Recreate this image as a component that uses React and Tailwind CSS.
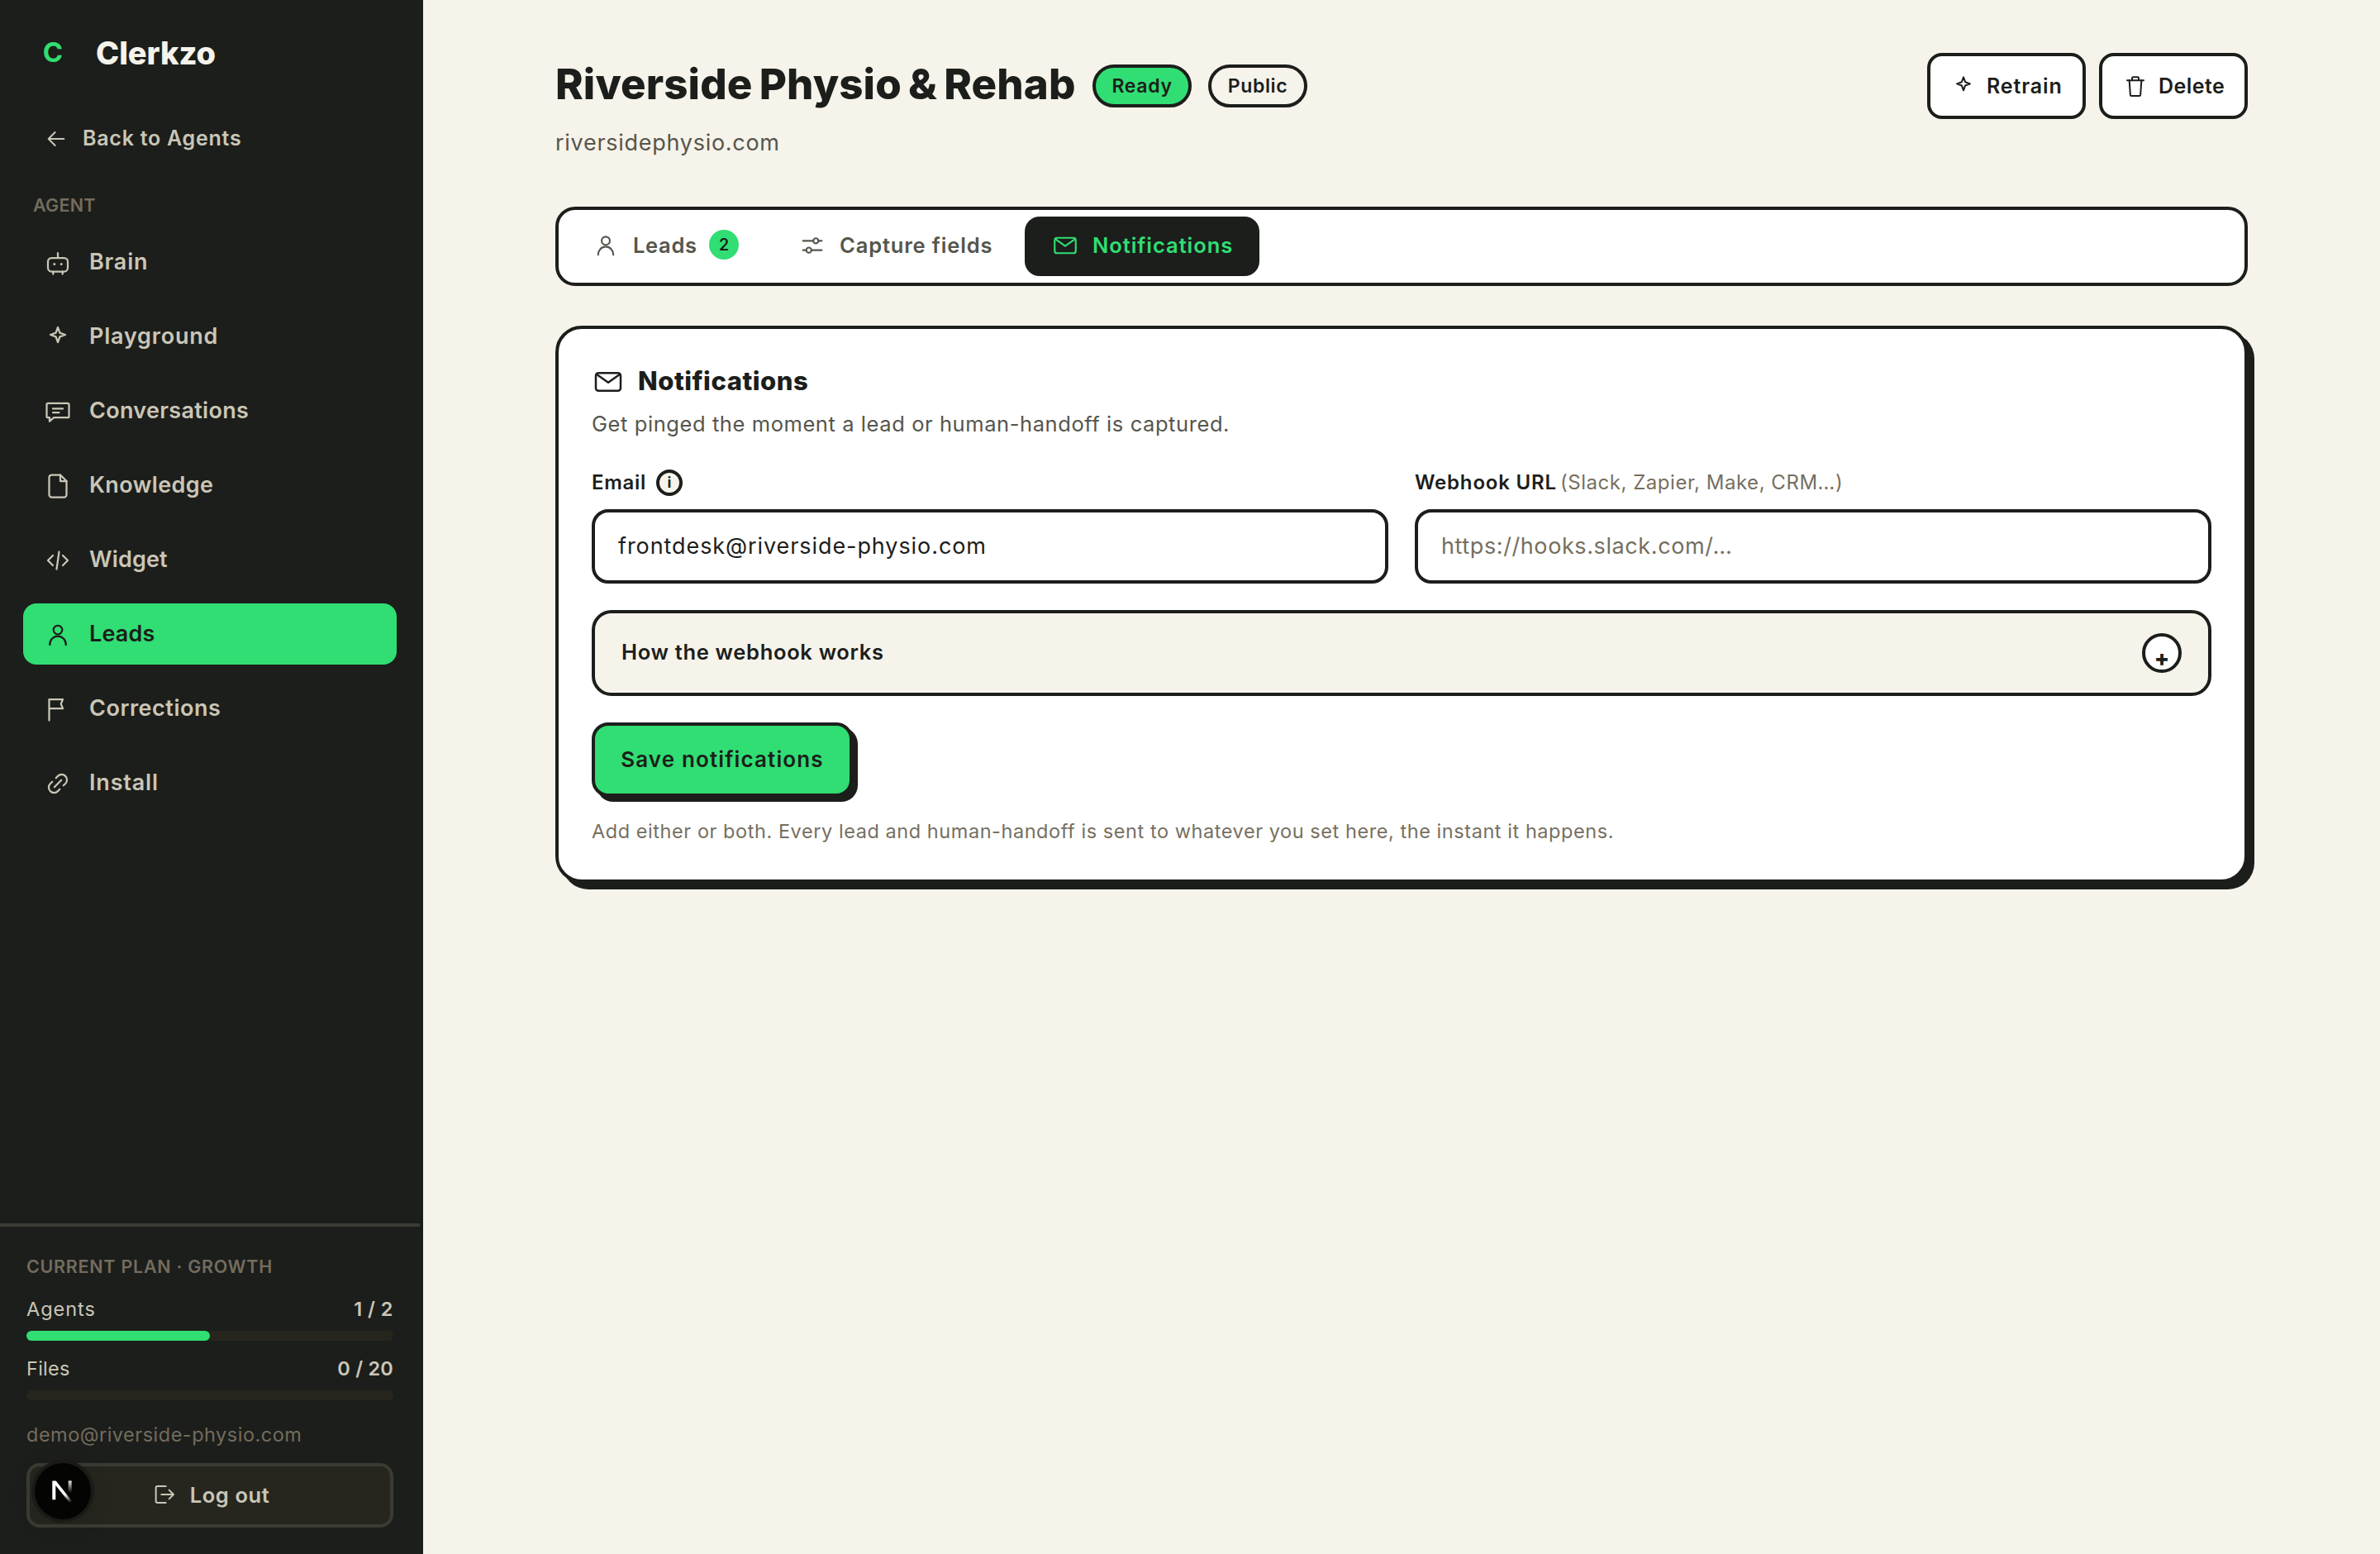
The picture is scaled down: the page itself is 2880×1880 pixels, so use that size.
import React from "react";

function Icon({ className = "", width = 1.5, children }) {
  return (
    <svg
      viewBox="0 0 24 24"
      fill="none"
      stroke="currentColor"
      strokeWidth={width}
      strokeLinecap="round"
      strokeLinejoin="round"
      className={`shrink-0 ${className}`}
      aria-hidden="true"
    >
      {children}
    </svg>
  );
}

const glyphs = {
  back: <path d="M19 12H5M11 6l-6 6 6 6" />,
  bot: (
    <>
      <rect x="4" y="8" width="16" height="11" rx="3" />
      <path d="M12 4v4M8.2 19v2M15.8 19v2" />
      <circle cx="9.2" cy="13" r="0.5" strokeWidth="1" />
      <circle cx="14.8" cy="13" r="0.5" strokeWidth="1" />
    </>
  ),
  spark: <path d="M12 4l1.6 4.4L18 10l-4.400 1.600L12 16l-1.600-4.400L6 10l4.400-1.600z" />,
  chat: (
    <>
      <path d="M4 5.200h16a1 1 0 0 1 1 1v9.600a1 1 0 0 1-1 1H8.800l-3.500 3v-3H4a1 1 0 0 1-1-1V6.200a1 1 0 0 1 1-1z" />
      <path d="M8 9.600h8M8 12.700h5" />
    </>
  ),
  file: (
    <>
      <path d="M14 3H7a2 2 0 0 0-2 2v14a2 2 0 0 0 2 2h10a2 2 0 0 0 2-2V8z" />
      <path d="M14 3v5h5" />
    </>
  ),
  code: <path d="M8 8l-4 4 4 4M16 8l4 4-4 4M13 5l-2 14" />,
  user: (
    <>
      <circle cx="12" cy="8" r="3.5" />
      <path d="M5.500 20a6.500 7 0 0 1 13 0" />
    </>
  ),
  flag: <path d="M5 21V4h11l-1.500 3.700L16 11.400H5" />,
  link: (
    <>
      <path d="M9.200 14.800l5.600-5.600" />
      <path d="M10.500 7.500l1.500-1.600a4.100 4.100 0 0 1 6.100 6.100L16.500 13.500" />
      <path d="M13.500 16.500l-1.500 1.600a4.100 4.100 0 0 1-6.100-6.100L7.500 10.500" />
    </>
  ),
  trash: (
    <>
      <path d="M4.500 7h15M9 7V5a1 1 0 0 1 1-1h4a1 1 0 0 1 1 1v2" />
      <path d="M6.500 7l.9 13.100a1 1 0 0 0 1 .9h7.200a1 1 0 0 0 1-.9L17.500 7" />
    </>
  ),
  sliders: (
    <>
      <path d="M4 8h8.800M17.200 8H20M4 16h2.800M11.200 16H20" />
      <circle cx="15" cy="8" r="2.200" />
      <circle cx="9" cy="16" r="2.200" />
    </>
  ),
  mail: (
    <>
      <rect x="3" y="5.500" width="18" height="13" rx="2" />
      <path d="M3.500 6.500l8.500 6 8.500-6" />
    </>
  ),
  logout: (
    <>
      <path d="M14 4.500H6.500A1.500 1.500 0 0 0 5 6v12a1.500 1.500 0 0 0 1.500 1.500H14" />
      <path d="M10 12h11M17 8l4 4-4 4" />
    </>
  ),
};

const nav = [
  { label: "Brain", icon: "bot", track: "tracking-[0.79px]" },
  { label: "Playground", icon: "spark", track: "tracking-[0.79px]" },
  { label: "Conversations", icon: "chat", track: "tracking-[0.31px]" },
  { label: "Knowledge", icon: "file", track: "tracking-[0.38px]" },
  { label: "Widget", icon: "code", track: "tracking-[0.14px]" },
  { label: "Leads", icon: "user", track: "tracking-[0.16px]", active: true },
  { label: "Corrections", icon: "flag", track: "tracking-[0.53px]" },
  { label: "Install", icon: "link", track: "tracking-[0.82px]" },
];

function Usage({ label, value, pct, track, valueTrack }) {
  return (
    <>
      <div className="flex h-9 items-center justify-between text-[23.5px] leading-9">
        <span className={track}>{label}</span>
        <span className={`font-semibold ${valueTrack}`}>{value}</span>
      </div>
      <div className="mt-2 h-3 rounded-full bg-[#26261f]">
        <div className="h-3 rounded-full bg-[#30de73]" style={{ width: `${pct}%` }} />
      </div>
    </>
  );
}

function Sidebar() {
  return (
    <aside className="flex h-full w-[512px] shrink-0 flex-col bg-[#1c1e1b] pr-1 text-[#cac6b7]">
      <div className="flex h-32 items-center pl-10">
        <span className="w-12 pb-[3px] text-center text-[33px] leading-10 font-bold text-[#30de73]">C</span>
        <span className="ml-7 text-[38px] leading-12 font-extrabold tracking-[-0.1px] text-[#f6f3eb]">Clerkzo</span>
      </div>
      <div className="flex h-[78px] items-center gap-4 pl-[52px]">
        <Icon className="mt-[2px] size-8">{glyphs.back}</Icon>
        <span className="text-[25px] leading-9 font-semibold tracking-[0.75px]">Back to Agents</span>
      </div>
      <div className="mt-[10px] flex h-16 items-center pl-10 text-[21.5px] font-semibold tracking-[0.25px] text-[#736c5d]">
        AGENT
      </div>
      <nav className="flex flex-col gap-4 pr-7 pl-7">
        {nav.map((n) => (
          <div
            key={n.label}
            className={`flex h-[74px] items-center gap-5 rounded-2xl pl-6 ${n.active ? "bg-[#30de73] text-[#1c1e1b]" : ""}`}
          >
            <Icon className="mt-[2px] size-9">{glyphs[n.icon]}</Icon>
            <span className={`text-[27px] leading-10 font-semibold ${n.track}`}>{n.label}</span>
          </div>
        ))}
      </nav>
      <div className="mt-auto flex h-[400px] flex-col border-t-4 border-[#3a3b32] px-8 pt-8">
        <div className="h-8 text-[21.5px] leading-8 font-semibold tracking-[0.72px] text-[#736c5d]">
          CURRENT PLAN · GROWTH
        </div>
        <div className="mt-[18px]">
          <Usage label="Agents" value="1 / 2" pct={50} track="tracking-[0.97px]" valueTrack="tracking-[0.5px]" />
        </div>
        <div className="mt-4">
          <Usage label="Files" value="0 / 20" pct={0} track="tracking-[0.26px]" valueTrack="tracking-[0.22px]" />
        </div>
        <div className="mt-6 h-9 text-[23.5px] leading-9 tracking-[0.5px] text-[#736c5d]">
          demo@riverside-physio.com
        </div>
        <div className="relative mt-4 flex h-[78px] items-center justify-center gap-4 rounded-2xl border-4 border-[#3a3b32] bg-[#26261f]">
          <Icon className="mb-[2px] size-8">{glyphs.logout}</Icon>
          <span className="text-[25.5px] leading-9 font-semibold tracking-[0.59px]">Log out</span>
          <div className="absolute -top-1 left-[6px] flex size-[68px] items-center justify-center rounded-full bg-[#040403] shadow-[0_0_0_4px_#1a1a17,0_4px_32px_rgba(0,0,0,0.12)]">
            <svg viewBox="0 0 28 30" className="h-[30px] w-[28px]" fill="none">
              <defs>
                <linearGradient id="diag" x1="17" y1="18" x2="25" y2="28" gradientUnits="userSpaceOnUse">
                  <stop stopColor="#fff" />
                  <stop offset="1" stopColor="#fff" stopOpacity="0" />
                </linearGradient>
                <linearGradient id="bar" x1="21" y1="1" x2="21" y2="17" gradientUnits="userSpaceOnUse">
                  <stop stopColor="#fff" />
                  <stop offset="1" stopColor="#fff" stopOpacity="0" />
                </linearGradient>
              </defs>
              <path d="M1.300 2.400h4.400l20 25.400-2.800 2L5.300 8v17.300h-4z" fill="url(#diag)" />
              <rect x="20.700" y="2.400" width="4" height="16" fill="url(#bar)" />
            </svg>
          </div>
        </div>
      </div>
    </aside>
  );
}

function Header() {
  return (
    <header className="flex h-32 items-start justify-between">
      <div>
        <div className="flex h-20 items-center">
          <h1 className="w-[650px] pb-1 text-[51px] leading-[60px] font-extrabold tracking-[0.1px] [word-spacing:-3px] whitespace-nowrap">
            Riverside Physio &amp; Rehab
          </h1>
          <span className="flex h-[52px] w-[120px] items-center justify-center rounded-full border-4 border-[#1c1e1b] bg-[#30de73] text-[23px] font-semibold tracking-[0.68px]">
            Ready
          </span>
          <span className="ml-5 flex h-[52px] w-[120px] items-center justify-center rounded-full border-4 border-[#1c1e1b] bg-[#f6f3eb] text-[23px] font-semibold tracking-[0.64px]">
            Public
          </span>
        </div>
        <p className="mt-[9px] h-10 text-[27px] leading-10 tracking-[0.72px] text-[#55564c]">riversidephysio.com</p>
      </div>
      <div className="flex gap-4 text-[25px] leading-9 font-semibold">
        <button className="flex h-20 w-[192px] items-center gap-3 rounded-[18px] border-4 border-[#1c1e1b] bg-white pl-6">
          <Icon className="size-8">{glyphs.spark}</Icon>
          <span className="pb-px tracking-[0.88px]">Retrain</span>
        </button>
        <button className="flex h-20 w-[180px] items-center gap-3 rounded-[18px] border-4 border-[#1c1e1b] bg-white pl-6">
          <Icon className="size-8">{glyphs.trash}</Icon>
          <span className="pb-px tracking-[0.45px]">Delete</span>
        </button>
      </div>
    </header>
  );
}

function Tabs() {
  return (
    <div className="mt-[58px] flex h-24 gap-2 rounded-3xl border-4 border-[#1c1e1b] bg-white p-2 text-[25.5px] leading-9 font-semibold text-[#55564c]">
      <div className="flex w-[242px] items-center pb-[2px] pl-8">
        <Icon className="size-[34px]">{glyphs.user}</Icon>
        <span className="ml-4 w-[92px] tracking-[0.67px]">Leads</span>
        <span className="mb-[2px] flex size-9 items-center justify-center rounded-full bg-[#30de73] text-[19.5px] text-[#1c1e1b]">
          2
        </span>
      </div>
      <div className="flex w-[298px] items-center pb-[2px] pl-8">
        <Icon className="size-[34px]">{glyphs.sliders}</Icon>
        <span className="ml-4 tracking-[0.85px]">Capture fields</span>
      </div>
      <div className="flex w-[284px] items-center rounded-[18px] bg-[#1c1e1b] pb-[2px] pl-8 text-[#30de73]">
        <Icon className="size-[34px]">{glyphs.mail}</Icon>
        <span className="ml-4 tracking-[0.95px]">Notifications</span>
      </div>
    </div>
  );
}

function NotificationsCard() {
  return (
    <section className="mt-12 flex h-[674px] flex-col rounded-[32px] border-4 border-[#1c1e1b] bg-white p-10 shadow-[8px_8px_0_#1c1e1b]">
      <div className="flex h-12 items-center gap-4">
        <Icon className="size-10">{glyphs.mail}</Icon>
        <h2 className="pb-[2px] text-[31px] leading-10 font-extrabold tracking-[0.5px]">Notifications</h2>
      </div>
      <p className="mt-2 h-[38px] text-[25.5px] leading-[38px] tracking-[0.58px] text-[#55564c]">
        Get pinged the moment a lead or human-handoff is captured.
      </p>
      <div className="mt-9 grid grid-cols-2 gap-x-8">
        <div>
          <div className="flex h-8 items-center text-[24px] leading-8 font-semibold">
            <span className="w-[78px] tracking-[0.7px]">Email</span>
            <span className="flex size-8 items-center justify-center rounded-full border-4 border-[#1c1e1b] bg-[#f6f3eb] text-[18px] leading-6 font-bold">
              i
            </span>
          </div>
          <div className="mt-4 flex h-[90px] items-center rounded-[20px] border-4 border-[#1c1e1b] bg-white pl-7 text-[27px] tracking-[0.92px]">
            frontdesk@riverside-physio.com
          </div>
        </div>
        <div>
          <div className="flex h-8 items-center text-[24px] leading-8">
            <span className="w-[176px] font-semibold tracking-[0.81px]">Webhook URL</span>
            <span className="tracking-[0.53px] text-[#766f5f]">(Slack, Zapier, Make, CRM…)</span>
          </div>
          <div className="mt-4 flex h-[90px] items-center rounded-[20px] border-4 border-[#1c1e1b] bg-white pl-7 text-[27px] tracking-[0.6px] text-[#766f5f]">
            https://hooks.slack.com/…
          </div>
        </div>
      </div>
      <div className="mt-8 flex h-[104px] items-center justify-between rounded-3xl border-4 border-[#1c1e1b] bg-[#f6f3eb] pr-8 pl-8">
        <span className="pb-[2px] text-[25.5px] leading-9 font-semibold tracking-[0.68px]">How the webhook works</span>
        <span className="flex size-12 items-center justify-center rounded-full border-4 border-[#1c1e1b] bg-white pt-[13px] text-[27px] leading-none font-extrabold">
          +
        </span>
      </div>
      <button className="mt-8 flex h-[90px] w-[316px] shrink-0 items-center justify-center rounded-[20px] border-4 border-[#1c1e1b] bg-[#30de73] text-[26px] leading-9 font-semibold tracking-[1.13px] whitespace-nowrap shadow-[6px_6px_0_#1c1e1b]">
        Save notifications
      </button>
      <p className="mt-6 h-9 text-[23.5px] leading-9 tracking-[0.56px] whitespace-nowrap text-[#766f5f]">
        Add either or both. Every lead and human-handoff is sent to whatever you set here, the instant it happens.
      </p>
    </section>
  );
}

export default function App() {
  return (
    <div className="flex h-[1880px] w-[2880px] overflow-hidden bg-[#f6f3eb] font-['Inter',sans-serif] text-[#1c1e1b]">
      <Sidebar />
      <main className="flex-1 px-40 pt-16">
        <Header />
        <Tabs />
        <NotificationsCard />
      </main>
    </div>
  );
}
